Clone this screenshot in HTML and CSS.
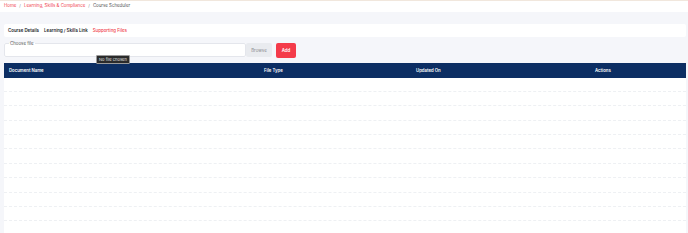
FILE: index.html
```html
<!DOCTYPE html>
<html lang="en">
<head>
<meta charset="utf-8">
<title>Course Scheduler</title>
<link rel="stylesheet" href="styles.css">
</head>
<body>
<header class="topbar">
  <nav class="crumbs">
    <a class="crumb link">Home</a><span class="sep">/</span>
    <a class="crumb link">Learning, Skills &amp; Compliance</a><span class="sep">/</span>
    <span class="crumb">Course Scheduler</span>
  </nav>
</header>
<main class="main">
  <div class="tabs">
    <span class="tab">Course Details</span>
    <span class="tab">Learning / Skills Link</span>
    <span class="tab active">Supporting Files</span>
  </div>
  <div class="upload">
    <fieldset class="filebox">
      <legend>Choose file</legend>
      <span class="tooltip">No file chosen</span>
    </fieldset>
    <button class="browse">Browse</button>
    <button class="add">Add</button>
  </div>
  <div class="table">
    <div class="thead">
      <span>Document Name</span>
      <span>File Type</span>
      <span>Updated On</span>
      <span>Actions</span>
    </div>
    <div class="row"></div>
    <div class="row"></div>
    <div class="row"></div>
    <div class="row"></div>
    <div class="row"></div>
    <div class="row"></div>
    <div class="row"></div>
    <div class="row"></div>
    <div class="row"></div>
    <div class="row"></div>
  </div>
</main>
</body>
</html>
```
FILE: styles.css
```css
* { box-sizing: border-box; }
html, body { margin: 0; padding: 0; }
body {
  background: #f5f6fa;
  font-family: Inter, "Noto Sans", sans-serif;
  font-size: 4.4px;
  color: #333;
  overflow: hidden;
  height: 233px;
  display: flex;
  flex-direction: column;
}
.topbar {
  background: #fff;
  height: 12px;
  flex: none;
  border-top: 1px solid #f1e7dd;
  padding: 2px 0 0 4px;
}
.crumbs { display: flex; align-items: center; gap: 3px; line-height: 6px; }
.crumb { color: #555; }
.crumb.link { color: #f0404c; }
.sep { color: #888; }
.main {
  flex: 1;
  min-height: 0;
  display: flex;
  flex-direction: column;
  padding: 12px 2px 0 4px;
}
.tabs {
  background: #fff;
  height: 13px;
  flex: none;
  border-radius: 2px;
  display: flex;
  align-items: center;
  gap: 5px;
  padding-left: 4px;
}
.tab { font-weight: 600; color: #1d1d1f; }
.tab.active { color: #f0404c; font-weight: 500; }
.upload {
  margin-top: 3.5px;
  height: 18px;
  flex: none;
  display: flex;
  align-items: flex-start;
}
.filebox {
  position: relative;
  margin: 0;
  width: 242px;
  height: 16px;
  padding: 0 0 0 4px;
  border: 1px solid #e4e6ec;
  border-radius: 2px;
  background: #fff;
}
.filebox legend {
  padding: 0 1px;
  color: #555;
  font-size: 4.4px;
  line-height: 5px;
}
.tooltip {
  position: absolute;
  left: 91px;
  top: 9px;
  background: #2b2b2b;
  color: #e6e6e6;
  border: 1px solid #9a9a9a;
  border-radius: 1px;
  padding: 1px 2px;
  font-size: 4.1px;
  line-height: 5px;
  white-space: nowrap;
  z-index: 2;
}
.browse {
  margin: 2.5px 0 0 0;
  width: 26px;
  height: 14px;
  border: 0;
  border-radius: 2px;
  background: #e9ebef;
  color: #8a8c90;
  font: inherit;
  padding: 0;
}
.add {
  margin: 2.5px 0 0 4px;
  width: 20px;
  height: 15px;
  border: 0;
  border-radius: 2px;
  background: #f43b4a;
  color: #fff;
  font: inherit;
  font-weight: 600;
  padding: 0;
}
.table {
  margin-top: 4px;
  width: 682px;
  flex: 1;
  min-height: 0;
  overflow: hidden;
  background: #fff;
}
.thead {
  display: grid;
  grid-template-columns: 255px 152px 179px 1fr;
  align-items: center;
  height: 15px;
  padding-left: 5px;
  background: #0c2e63;
  color: #fff;
  font-weight: 600;
  font-size: 4.3px;
}
.row {
  height: 14.4px;
  border-bottom: 1px dashed #eef0f3;
}
```
